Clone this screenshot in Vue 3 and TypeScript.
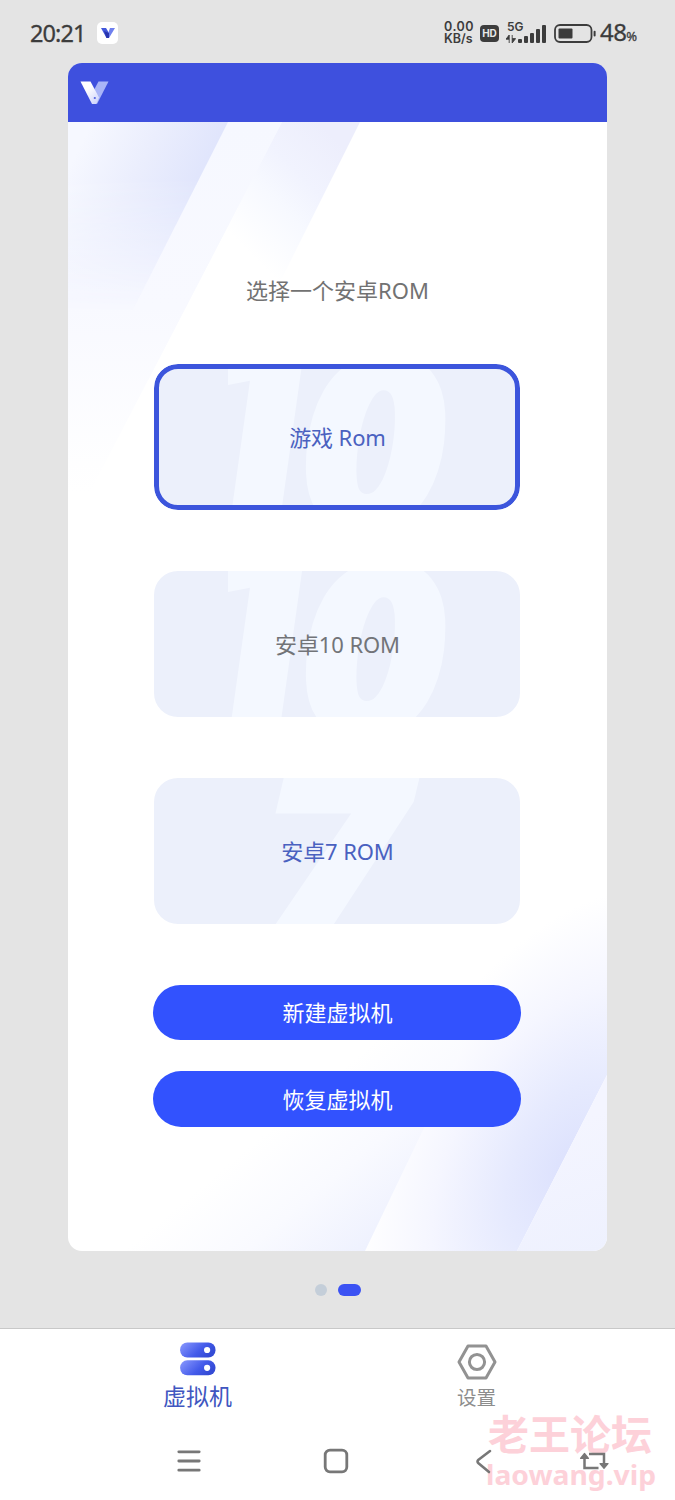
<script setup lang="ts">
interface Digit {
  glyph: string
  transform: string
  size: number
  kind: 'upright' | 'slanted'
}
interface RomOption {
  label: string
  digits: Digit[]
  tone: 'blue' | 'grey'
  selected: boolean
}

const ten: Digit[] = [
  { glyph: '1', transform: 'translate(-7 185) skewX(-8)', size: 280, kind: 'upright' },
  { glyph: '0', transform: 'translate(146 165) scale(1.09 1) skewX(2)', size: 243, kind: 'slanted' },
]
const seven: Digit[] = [
  { glyph: '7', transform: 'translate(98 174) scale(1.08 1)', size: 250, kind: 'slanted' },
]

const options: RomOption[] = [
  { label: '游戏 Rom', digits: ten, tone: 'blue', selected: true },
  { label: '安卓10 ROM', digits: ten, tone: 'grey', selected: false },
  { label: '安卓7 ROM', digits: seven, tone: 'blue', selected: false },
]

const actions: string[] = ['新建虚拟机', '恢复虚拟机']
const bars: number[] = [4, 7, 10, 14, 18]
</script>

<template>
  <div class="screen">
    <header class="status">
      <span class="clock">20:21</span>
      <span class="app-badge">
        <svg width="14" height="12" viewBox="0 0 14 12">
          <path d="M0 1H5L8 6 6.5 11H5.5Z" fill="#4358dc" />
          <path d="M9 1H14L8 11H5.5Z" fill="#6f80ee" />
          <path d="M3 4L8 6 8 11H5.5Z" fill="#2935ae" />
        </svg>
      </span>
      <span class="spacer"></span>
      <span class="speed"><span>0.00</span><span>KB/s</span></span>
      <span class="hd">HD</span>
      <span class="signal">
        <span class="net">5G</span>
        <svg class="updown" width="10" height="8" viewBox="0 0 10 8">
          <path d="M3.2 8V0L0 4.2H3.2M6.2 0V8L9.6 3.6H6.2" fill="#3c3c3c" stroke="#3c3c3c" stroke-width=".9" />
        </svg>
        <span class="bars"><i v-for="h in bars" :key="h" :style="{ height: h + 'px' }"></i></span>
      </span>
      <svg class="battery" width="42" height="19" viewBox="0 0 42 19">
        <rect x="1" y="1" width="36.5" height="17" rx="5" fill="none" stroke="#3c3c3c" stroke-width="1.8" />
        <rect x="4.5" y="4.5" width="14" height="10" rx="1" fill="#3c3c3c" />
        <rect x="39.6" y="6.8" width="2" height="5.6" rx="1" fill="#3c3c3c" />
      </svg>
      <span class="percent">48<small>%</small></span>
    </header>

    <main class="card">
      <div class="card-head">
        <svg width="29" height="24" viewBox="0 0 29 24">
          <defs>
            <linearGradient id="vLeft" x1="0" y1="0" x2="0.7" y2="1">
              <stop offset="0.4" stop-color="#fff" />
              <stop offset="1" stop-color="#d3d8fc" />
            </linearGradient>
          </defs>
          <path d="M18.5 .5H28.5L17 23 14 17V9Z" fill="#a9b5f7" />
          <path d="M.5 .5H10.5L19 16.5 16.5 23H12Z" fill="url(#vLeft)" />
          <circle cx="14.8" cy="17" r="1.1" fill="#5263df" />
        </svg>
      </div>
      <div class="card-body">
        <svg class="backdrop" width="539" height="1129" viewBox="0 0 539 1129">
          <defs>
            <linearGradient id="rayA" gradientUnits="userSpaceOnUse" x1="122" y1="79" x2="12" y2="23">
              <stop offset="0" stop-color="#e0e5fc" />
              <stop offset="0.5" stop-color="#ebeefd" />
              <stop offset="1" stop-color="#f6f8ff" />
            </linearGradient>
            <linearGradient id="fadeA" x1="0" y1="0" x2="0" y2="1">
              <stop offset="0.3" stop-color="#fff" />
              <stop offset="1" stop-color="#000" />
            </linearGradient>
            <mask id="maskA" maskUnits="userSpaceOnUse" x="0" y="0" width="300" height="190">
              <rect width="300" height="190" fill="url(#fadeA)" />
            </mask>
            <linearGradient id="rayB" gradientUnits="userSpaceOnUse" x1="0" y1="0" x2="0" y2="370">
              <stop offset="0" stop-color="#f6f8ff" />
              <stop offset="0.5" stop-color="#f8f9ff" />
              <stop offset="1" stop-color="#fff" />
            </linearGradient>
            <linearGradient id="rayC" gradientUnits="userSpaceOnUse" x1="270" y1="20" x2="168" y2="122">
              <stop offset="0" stop-color="#edeefc" />
              <stop offset="0.35" stop-color="#f1f3fe" />
              <stop offset="0.6" stop-color="#f7f9ff" />
              <stop offset="0.98" stop-color="#fff" />
            </linearGradient>
            <radialGradient
              id="glow"
              gradientUnits="userSpaceOnUse"
              cx="0"
              cy="0"
              r="1"
              gradientTransform="translate(500 1045) rotate(27) scale(180 300)"
            >
              <stop offset="0" stop-color="#dce1fd" />
              <stop offset="0.3" stop-color="#e6eafe" />
              <stop offset="0.65" stop-color="#f5f6ff" />
              <stop offset="1" stop-color="#fff" />
            </radialGradient>
            <linearGradient id="rayD" gradientUnits="userSpaceOnUse" x1="300" y1="1129" x2="200" y2="1009">
              <stop offset="0" stop-color="#eef1fe" />
              <stop offset="0.5" stop-color="#f9faff" />
              <stop offset="1" stop-color="#fff" />
            </linearGradient>
            <linearGradient id="rayE" gradientUnits="userSpaceOnUse" x1="500" y1="1000" x2="539" y2="1129">
              <stop offset="0" stop-color="#f4f5ff" />
              <stop offset="1" stop-color="#eef1fe" />
            </linearGradient>
          </defs>
          <path d="M160 0H292L210 164H126Z" fill="url(#rayC)" />
          <path d="M160 0H214L22 370 0 410V158L80 158Z" fill="url(#rayB)" />
          <path d="M0 0H214L80 258H0Z" fill="url(#rayB)" />
          <path d="M0 0H160L40 237 0 316Z" fill="url(#rayA)" mask="url(#maskA)" />
          <path d="M539 700V953L449 1129H250V700Z" fill="url(#glow)" />
          <path d="M425 862L297 1129H50L220 862Z" fill="url(#rayD)" />
          <path d="M539 953V1129H449Z" fill="url(#rayE)" />
        </svg>

        <h1 class="title">选择一个安卓ROM</h1>

        <div class="options">
          <div v-for="o in options" :key="o.label" class="option" :class="[o.tone, { selected: o.selected }]">
            <svg class="numeral" width="366" height="146" viewBox="0 0 366 146" aria-hidden="true">
              <clipPath id="trim"><rect x="74" width="292" height="146" /></clipPath>
              <g clip-path="url(#trim)">
                <text
                  v-for="d in o.digits"
                  :key="d.glyph"
                  :class="d.kind"
                  :transform="d.transform"
                  :font-size="d.size"
                >{{ d.glyph }}</text>
              </g>
            </svg>
            <span class="label">{{ o.label }}</span>
          </div>
        </div>

        <div class="actions">
          <button v-for="a in actions" :key="a" class="action" type="button">{{ a }}</button>
        </div>
      </div>
    </main>

    <div class="dots"><i></i><i class="on"></i></div>

    <footer class="bottom">
      <nav class="tabs">
        <div class="tab active">
          <svg width="36" height="34" viewBox="0 0 36 34">
            <defs>
              <linearGradient id="srv" x1="0" y1="0" x2="1" y2="0.45">
                <stop offset="0.1" stop-color="#8090fb" />
                <stop offset="0.65" stop-color="#445bea" />
                <stop offset="1" stop-color="#344bd5" />
              </linearGradient>
            </defs>
            <rect x=".1" y=".5" width="35.4" height="15" rx="7.2" fill="url(#srv)" />
            <rect x=".1" y="18.3" width="35.4" height="15" rx="7.2" fill="url(#srv)" />
            <circle cx="27.1" cy="8" r="3.1" fill="#fff" />
            <circle cx="27.1" cy="25.8" r="3.1" fill="#fff" />
          </svg>
          <span>虚拟机</span>
        </div>
        <div class="tab">
          <svg width="40" height="36" viewBox="0 0 40 36" fill="none" stroke="#929292" stroke-width="3">
            <path d="M11 2H29L38 18 29 34H11L2 18Z" stroke-linejoin="round" />
            <circle cx="20" cy="18" r="7.6" />
          </svg>
          <span>设置</span>
        </div>
      </nav>

      <svg class="mark" width="180" height="86" viewBox="0 0 180 86">
        <text x="8" y="42" class="mark-cn" textLength="164" lengthAdjust="spacingAndGlyphs">老王论坛</text>
        <text x="6" y="76.5" class="mark-en" textLength="170" lengthAdjust="spacingAndGlyphs">laowang.vip</text>
      </svg>

      <div class="sysbar">
        <svg width="24" height="24" viewBox="0 0 24 24" stroke="#777" stroke-width="2.8" stroke-linecap="round">
          <path d="M1.8 2.8H22.2M1.8 12H22.2M1.8 21.2H22.2" />
        </svg>
        <svg width="26" height="26" viewBox="0 0 26 26" fill="none" stroke="#777" stroke-width="2.8">
          <rect x="2.2" y="2.2" width="21.6" height="21.6" rx="4.8" />
        </svg>
        <svg width="17" height="25" viewBox="0 0 17 25" fill="none" stroke="#777" stroke-width="2.6" stroke-linecap="round" stroke-linejoin="round">
          <path d="M14 2L2.5 10.7Q.5 12.5 2.5 14.3L13 23" />
        </svg>
        <svg width="30" height="20" viewBox="0 0 30 20" fill="none" stroke="#777" stroke-width="2.5">
          <path d="M10 3H25V14M19.5 17H5.5V6" />
          <path d="M1.5 7.3L5.5 2.5 9.5 7.3ZM21 12.5L25 17.3 29 12.5Z" fill="#777" stroke-width="1.2" stroke-linejoin="round" />
        </svg>
      </div>
    </footer>
  </div>
</template>

<style>
body {
  margin: 0;
  background: #e4e4e4;
}
</style>

<style scoped>
.screen {
  width: 675px;
  height: 1500px;
  display: flex;
  flex-direction: column;
  align-items: center;
  overflow: hidden;
  position: relative;
  background: #e4e4e4;
  font-family: 'Noto Sans', 'Noto Sans CJK SC', sans-serif;
}
svg {
  display: block;
  flex: none;
}
.status {
  box-sizing: border-box;
  width: 675px;
  height: 63px;
  padding: 3px 36px 0 30px;
  display: flex;
  align-items: center;
  color: #3c3c3c;
}
.clock {
  width: 67px;
  font-size: 23.5px;
  font-weight: 400;
  letter-spacing: -0.9px;
  line-height: 30px;
  -webkit-text-stroke: 0.3px #3c3c3c;
}
.app-badge {
  width: 21px;
  height: 22px;
  border-radius: 5px;
  background: #fff;
  display: flex;
  align-items: center;
  justify-content: center;
}
.spacer {
  flex: 1;
}
.speed {
  width: 36px;
  display: flex;
  flex-direction: column;
  font: 600 12.5px/12px Inter, sans-serif;
  white-space: nowrap;
}
.speed span:first-child {
  letter-spacing: 0.5px;
}
.hd {
  width: 19px;
  height: 17px;
  border-radius: 4px;
  background: #3c3c3c;
  color: #e8e8e8;
  font: 700 10px/17px Inter, sans-serif;
  text-align: center;
}
.signal {
  position: relative;
  width: 40px;
  height: 22px;
  margin: 0 8px 0 7px;
}
.net {
  position: absolute;
  left: 1px;
  top: -1px;
  font: 600 12px/11px Inter, sans-serif;
}
.updown {
  position: absolute;
  left: 0;
  bottom: 1.5px;
}
.bars {
  position: absolute;
  right: 0;
  bottom: 1px;
  display: flex;
  align-items: flex-end;
  gap: 2.3px;
}
.bars i {
  width: 3.8px;
  border-radius: 1px;
  background: #3c3c3c;
}
.percent {
  width: 39px;
  margin-left: 4px;
  padding-top: 2px;
  font-size: 24px;
  font-weight: 400;
  line-height: 30px;
  letter-spacing: -0.6px;
  white-space: nowrap;
  -webkit-text-stroke: 0.3px #3c3c3c;
}
.percent small {
  font-size: 13px;
  letter-spacing: 0;
}
.card {
  width: 539px;
  height: 1188px;
  border-radius: 14px;
  overflow: hidden;
  background: #fff;
  flex: none;
}
.card-head {
  box-sizing: border-box;
  height: 59px;
  padding: 18px 12px;
  background: #3e50de;
}
.card-body {
  position: relative;
  box-sizing: border-box;
  height: 1129px;
  padding: 151.5px 1px 0 0;
  display: flex;
  flex-direction: column;
  align-items: center;
}
.backdrop {
  position: absolute;
  left: 0;
  top: 0;
}
.title {
  position: relative;
  margin: 0;
  padding-left: 1px;
  height: 32px;
  font-size: 22px;
  font-weight: 400;
  line-height: 32px;
  color: #727272;
}
.options {
  position: relative;
  margin-top: 58.9px;
  display: flex;
  flex-direction: column;
  gap: 60.8px;
}
.option {
  position: relative;
  width: 366px;
  height: 146px;
  border-radius: 24px;
  overflow: hidden;
  background: #ecf0fb;
  display: flex;
  align-items: center;
  justify-content: center;
}
.option.selected::after {
  content: '';
  position: absolute;
  inset: 0;
  border: 5px solid #3c55dc;
  border-radius: 24px;
}
.numeral {
  position: absolute;
  left: 0;
  top: 0;
}
.numeral text {
  fill: #f4f8ff;
}
.slanted {
  font-family: 'Open Sans', 'Noto Sans', sans-serif;
  font-weight: 800;
  font-style: italic;
}
.upright {
  font-family: 'DejaVu Sans', sans-serif;
  font-weight: 700;
}
.label {
  position: relative;
  padding-left: 1px;
  font-size: 22px;
  line-height: 32px;
  letter-spacing: -0.1px;
}
.blue .label {
  color: #4a61c0;
}
.grey .label {
  color: #727478;
}
.actions {
  position: relative;
  margin-top: 61px;
  display: flex;
  flex-direction: column;
  gap: 31px;
}
.action {
  width: 368px;
  height: 55.5px;
  padding: 0 0 0 1px;
  border: 0;
  border-radius: 28px;
  background: #3252fe;
  color: #fff;
  font-family: inherit;
  font-size: 22px;
  line-height: 55px;
}
.dots {
  height: 78px;
  display: flex;
  align-items: center;
  gap: 11px;
  flex: none;
}
.dots i {
  width: 12.5px;
  height: 12.5px;
  border-radius: 7px;
  background: #c4ced9;
}
.dots .on {
  width: 22.5px;
  background: #3b52f3;
}
.bottom {
  position: relative;
  width: 675px;
  height: 172px;
  box-sizing: border-box;
  margin-top: -1px;
  border-top: 1px solid #c8c8c8;
  background: #fff;
  flex: none;
}
.tabs {
  display: grid;
  grid-template-columns: 279px 279px;
  padding-left: 58px;
  height: 100px;
}
.tab {
  display: flex;
  flex-direction: column;
  align-items: center;
  padding-top: 15px;
  color: #8d8d8d;
  font-size: 19.5px;
  line-height: 28px;
}
.tab span {
  margin-top: 4px;
}
.tab.active {
  padding-top: 13px;
  color: #4056c0;
  font-size: 23px;
  line-height: 32px;
}
.mark {
  position: absolute;
  left: 480px;
  top: 79px;
}
.mark text {
  fill: #fdd1d9;
  font-weight: 700;
}
.mark-cn {
  font-family: 'Noto Sans CJK SC', sans-serif;
  font-size: 41px;
}
.mark-en {
  font-family: 'Noto Sans', sans-serif;
  font-size: 27px;
}
.sysbar {
  position: relative;
  display: grid;
  grid-template-columns: 147px 147px 150px 70px;
  align-items: center;
  justify-items: center;
  height: 26px;
  margin-top: 19px;
  padding-left: 115px;
}
</style>
